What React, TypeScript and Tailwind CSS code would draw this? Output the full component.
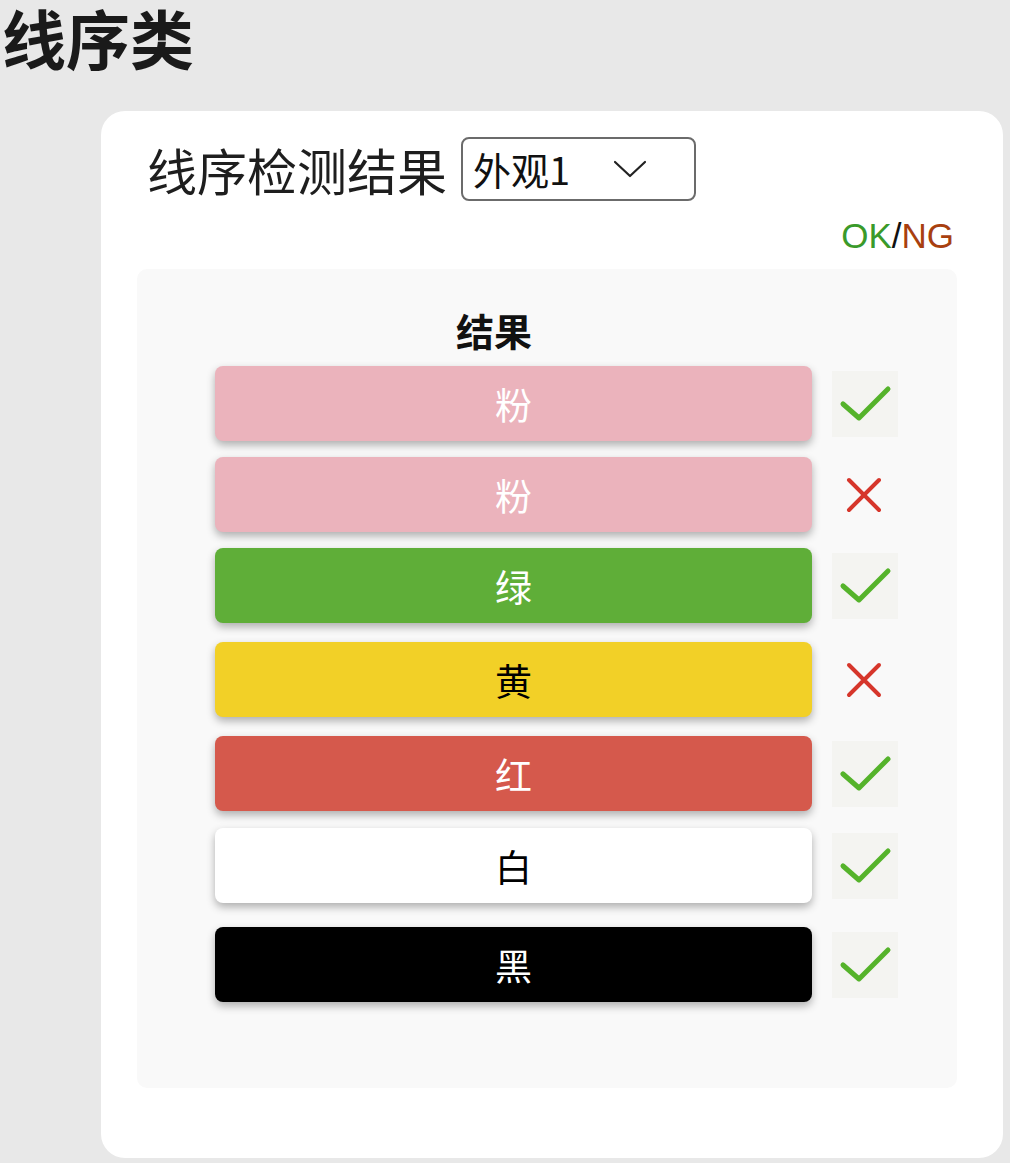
import React from "react";

type Row = {
  label: string;
  bg: string;
  text: string;
  ok: boolean;
  mt: string;
};

const rows: Row[] = [
  { label: "粉", bg: "bg-[#ebb3bc]", text: "text-white", ok: true, mt: "mt-0" },
  { label: "粉", bg: "bg-[#ebb3bc]", text: "text-white", ok: false, mt: "mt-[16px]" },
  { label: "绿", bg: "bg-[#5fae38]", text: "text-white", ok: true, mt: "mt-[16px]" },
  { label: "黄", bg: "bg-[#f2d027]", text: "text-black", ok: false, mt: "mt-[19px]" },
  { label: "红", bg: "bg-[#d5594c]", text: "text-white", ok: true, mt: "mt-[19px]" },
  { label: "白", bg: "bg-white", text: "text-black", ok: true, mt: "mt-[17px]" },
  { label: "黑", bg: "bg-black", text: "text-white", ok: true, mt: "mt-[24px]" },
];

const cjk = "font-['Noto_Sans_CJK_SC','Noto_Sans',sans-serif]";

function CheckMark() {
  return (
    <div className="w-[66px] h-[66px] bg-[#f4f4f1] flex items-center justify-center">
      <svg width="66" height="66" viewBox="0 0 66 66" fill="none">
        <path
          d="M11 33 L27 47 L56 18"
          stroke="#55b32b"
          strokeWidth="5"
          strokeLinecap="round"
          strokeLinejoin="round"
        />
      </svg>
    </div>
  );
}

function CrossMark() {
  return (
    <div className="w-[66px] h-[66px] flex items-center justify-center">
      <svg width="66" height="66" viewBox="0 0 66 66" fill="none">
        <path
          d="M17 18 L47 48 M47 18 L17 48"
          stroke="#d6362b"
          strokeWidth="4"
          strokeLinecap="round"
        />
      </svg>
    </div>
  );
}

export default function App() {
  return (
    <div className={`min-h-[1163px] w-[1010px] bg-[#e8e8e8] ${cjk}`}>
      <h1 className="pl-[2px] text-[64px] leading-[72px] font-bold text-[#1a1a1a]">线序类</h1>

      {/* card */}
      <div className="mt-[39px] ml-[101px] w-[902px] h-[1047px] bg-white rounded-[24px] pt-[26px] px-[36px]">
        <div className="flex items-center pl-[10px]">
          <span className="text-[50px] leading-[64px] text-[#1e1e1e]">线序检测结果</span>
          <div className="ml-[14px] w-[235px] h-[64px] border-2 border-[#6b6b6b] rounded-lg flex items-center pl-[10px] pr-[47px] justify-between">
            <span className="text-[38px] leading-[44px] text-[#111]">外观1</span>
            <svg width="34" height="18" viewBox="0 0 34 18" fill="none">
              <path d="M2 2 L17 16 L32 2" stroke="#222" strokeWidth="2.2" strokeLinecap="round" strokeLinejoin="round" />
            </svg>
          </div>
        </div>

        <div className="mt-[14px] w-[820px] flex justify-end pr-[3px] font-['Liberation_Sans',Arial,sans-serif] text-[35px] leading-[42px]">
          <span className="text-[#3a9a2a]">OK</span>
          <span className="text-[#111]">/</span>
          <span className="text-[#a8400f]">NG</span>
        </div>

        {/* result panel */}
        <div className="mt-[12px] w-[820px] h-[819px] bg-[#f9f9f9] rounded-[10px] pt-[41px]">
          <div className="pl-[319px] text-[38px] leading-[40px] font-bold text-[#111]">结果</div>
          <div className="mt-[16px] flex flex-col">
            {rows.map((r, i) => (
              <div key={i} className={`flex items-center pl-[78px] ${r.mt}`}>
                <div
                  className={`w-[597px] h-[75px] rounded-lg flex items-center justify-center shadow-[0_4px_9px_rgba(0,0,0,0.3)] ${r.bg} ${r.text} text-[37px] leading-[44px]`}
                >
                  {r.label}
                </div>
                <div className="ml-[20px]">{r.ok ? <CheckMark /> : <CrossMark />}</div>
              </div>
            ))}
          </div>
        </div>
      </div>
    </div>
  );
}
